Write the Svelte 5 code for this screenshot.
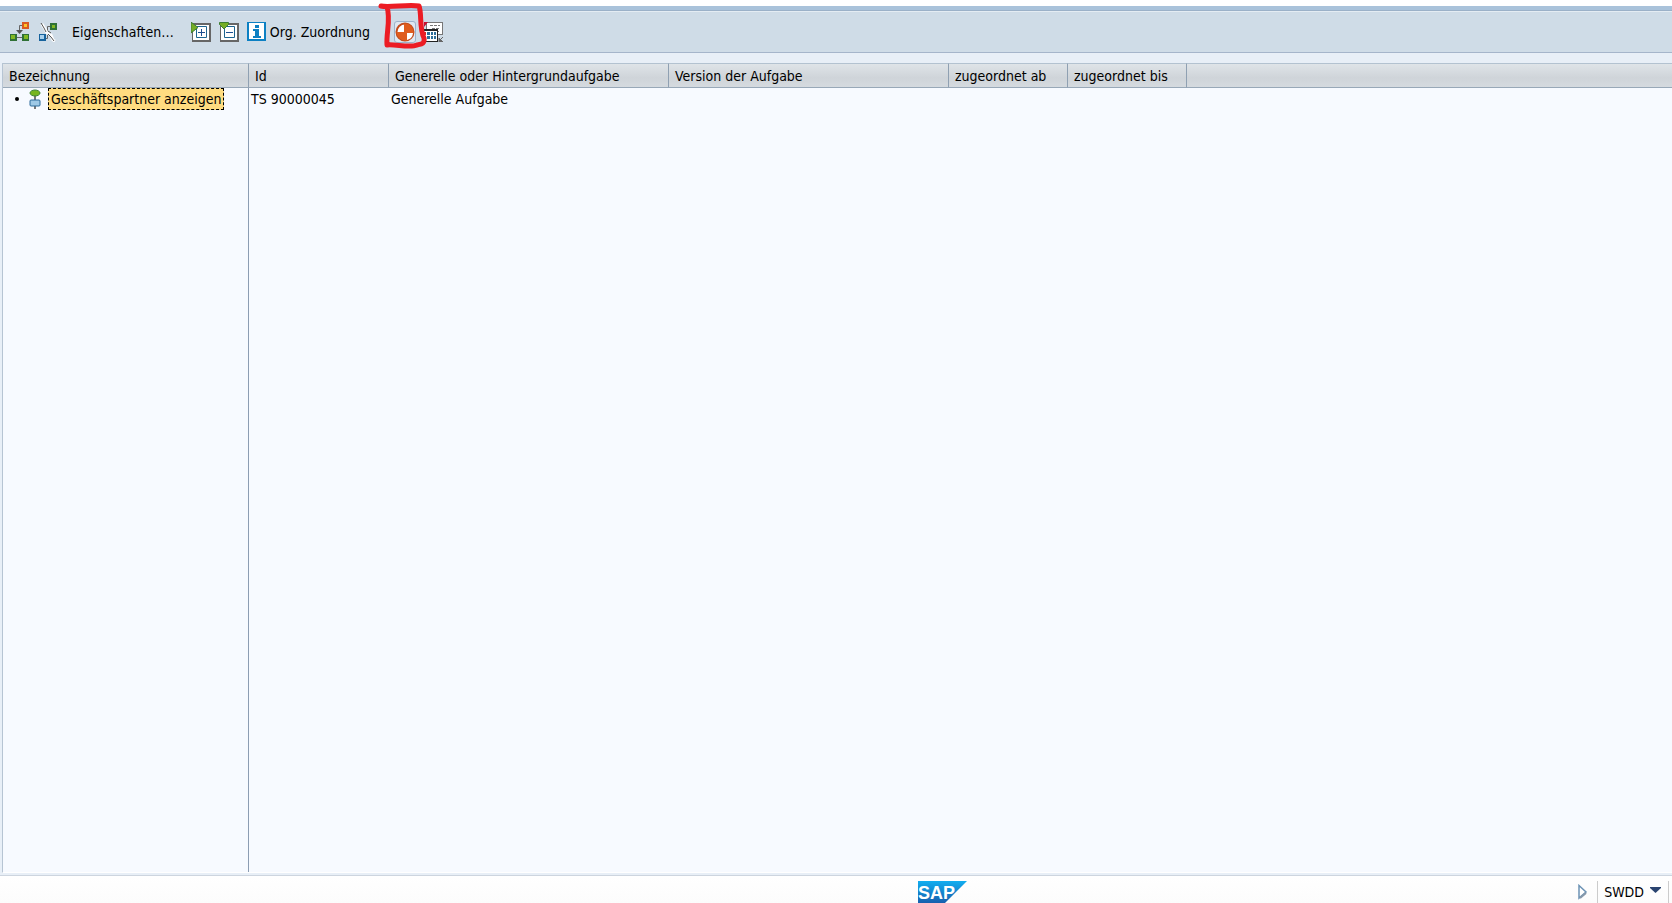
<script>
  const columns = [
    { label: 'Bezeichnung', width: 246 },
    { label: 'Id', width: 140 },
    { label: 'Generelle oder Hintergrundaufgabe', width: 280 },
    { label: 'Version der Aufgabe', width: 280 },
    { label: 'zugeordnet ab', width: 119 },
    { label: 'zugeordnet bis', width: 119 },
  ];
</script>

<div class="app">
  <div class="band"></div>
  <header class="toolbar">
    <button class="icon" aria-label="Zuordnung anlegen">
      <svg width="20" height="20">
        <path d="M12 3.5H9.5V9" fill="none" stroke="#666" />
        <path d="M6 8h7l-3.5 4z" fill="#555" />
        <path d="M6 15h7v1H6z" fill="#666" />
        <path d="M12 0h7v7h-7z" fill="#d95a22" /><path d="M14 2h3v3h-3z" fill="#fbc62d" />
        <path d="M0 12h7v7H0zM12 12h7v7h-7z" fill="#2f7136" /><path d="M1 13h4v4H1zM14 13h4v4h-4z" fill="#82b923" />
      </svg>
    </button>
    <button class="icon" aria-label="Zuordnung löschen">
      <svg width="20" height="20">
        <path d="M12 4.5H9.5V16.5H6" fill="none" stroke="#666" />
        <path d="M12 1h7v7h-7z" fill="#2f7136" /><path d="M14 3h3v3h-3z" fill="#82b923" />
        <path d="M1 12h7v7H1z" fill="#17639d" /><path d="M2 13h4v4H2z" fill="#a9d1ed" />
        <path d="M4 2l3 5 2 4 4 2 2 5 2 1" fill="none" stroke="#fff" stroke-width="3" />
        <path d="M3 1l3 5 2 4M10 9l3 2M10 12l3 3 3 4" fill="none" stroke="#555" />
      </svg>
    </button>
    <button class="text">Eigenschaften…</button>
    <button class="icon" aria-label="Teilbaum expandieren">
      <svg width="20" height="20">
        <path d="M1 1h19v19H1z" fill="#666" /><path d="M2 3h16v15H2z" fill="#fff" />
        <path d="M5.5 4.5h10v11h-10z" fill="#fff" stroke="#1d6591" />
        <path d="M10.5 7v7M7 10.5h7" stroke="#1d4f91" />
        <path d="M0 0l7 5.5L0 11z" fill="#75ac25" stroke="#3c7d34" />
      </svg>
    </button>
    <button class="icon" aria-label="Teilbaum komprimieren">
      <svg width="20" height="20">
        <path d="M1 1h19v19H1z" fill="#666" /><path d="M2 3h16v15H2z" fill="#fff" />
        <path d="M5.5 4.5h10v11h-10z" fill="#fff" stroke="#1d6591" />
        <path d="M7 10.5h7" stroke="#1d4f91" />
        <path d="M.5 .5h9v2L5 7 .5 2.5z" fill="#75ac25" stroke="#3c7d34" />
      </svg>
    </button>
    <button class="text info">
      <svg width="20" height="20">
        <path d="M0 0h19v19H0z" fill="#0c80c3" /><path d="M2 1h15v16H2z" fill="#fff" />
        <path d="M8 3h4v3H8zM6 7h6v7h2v2H6v-2h2V9H6z" fill="#0c80c3" />
      </svg>
      <span>Org. Zuordnung</span>
    </button>
    <div class="marked">
      <button class="help" aria-label="Hilfe">
        <svg width="20" height="20">
          <circle cx="10" cy="10" r="8.5" fill="#fff" stroke="#c34c1c" stroke-width="2" />
          <path d="M9 10V1.500h1a8.500 8.500 0 0 1 8.500 9.500H12v7.500h-2A8.500 8.500 0 0 1 1.500 10z" fill="#df5c1d" />
          <path d="M12 11h6a8 8 0 0 1-6 7z" fill="#fff" />
        </svg>
      </button>
      <svg class="pen" width="54" height="52" aria-hidden="true">
        <path d="M6 5C14 7 33 3 44 5C47 12 44 27 49 37C50 43 46 43 42 44C35 47 20 43 12 44C11 33 16 17 12 6" fill="none" stroke="#ec1c24" stroke-width="5" stroke-linecap="round" stroke-linejoin="round" />
      </svg>
    </div>
    <button class="icon" aria-label="Layout">
      <svg width="20" height="20">
        <path d="M2 0h17v13H2z" fill="#777" /><path d="M3 1h15v11H3z" fill="#fff" />
        <path d="M6 3.5h10M8 6.5h8M12 9.5h4" stroke="#777" stroke-dasharray="3 1" />
        <path d="M0 7h14v13H0z" fill="#222" /><path d="M0 9h13v10H0z" fill="#fff" />
        <path d="M0 10h2v3H0zM0 14h2v4H0z" fill="#d22" />
        <path d="M3 10h3v3H3zM7 10h2v3H7zM10 10h2v3h-2zM3 14h3v3H3zM7 14h2v3H7zM10 14h2v3h-2z" fill="#2d6e98" />
        <path d="M0 0h4L0 5z" fill="#c8102e" />
        <path d="M15 16v4h4zM15 19l4-4" fill="#666" stroke="#666" />
      </svg>
    </button>
  </header>

  <main>
    <table>
      <colgroup>
        {#each columns as c}<col style="width: {c.width}px" />{/each}
        <col />
      </colgroup>
      <thead>
        <tr>
          {#each columns as c}<th scope="col">{c.label}</th>{/each}
          <td></td>
        </tr>
      </thead>
      <tbody>
        <tr>
          <td>
            <div class="node">
              <span class="bullet"></span>
              <svg width="12" height="20">
                <path d="M6 6v14" stroke="#777" stroke-width="2" />
                <ellipse cx="6" cy="4" rx="5" ry="3" fill="#76b51f" stroke="#3e8238" />
                <rect x="1" y="11" width="10" height="6" rx="1" fill="#9fc9e6" stroke="#2c6b9a" />
              </svg>
              <span class="selected">Geschäftspartner anzeigen</span>
            </div>
          </td>
          <td>TS 90000045</td>
          <td>Generelle Aufgabe</td>
          <td></td><td></td><td></td><td></td>
        </tr>
      </tbody>
    </table>
  </main>

  <footer>
    <div class="brand">
      <svg width="50" height="22" role="img" aria-label="SAP">
        <defs>
          <linearGradient id="sap" x2="0" y2="1"><stop stop-color="#12aef0" /><stop offset="1" stop-color="#175fae" /></linearGradient>
        </defs>
        <path d="M0 0h49L27 22H0z" fill="url(#sap)" />
        <text x="0" y="18">SAP</text>
      </svg>
    </div>
    <button class="icon" aria-label="Statusfelder einblenden">
      <svg width="12" height="16">
        <path d="M2 1.5l7 6.500-7 6z" fill="#fff" stroke="#6c93b5" stroke-width="1.500" />
        <path d="M9 9l-6 5" stroke="#8798aa" stroke-width="2" />
      </svg>
    </button>
    <button class="system">
      <span>SWDD</span>
      <svg width="12" height="10"><path d="M0 0h11v1L5.500 6 0 1z" fill="#2a4470" /></svg>
    </button>
  </footer>
</div>

<style>
  :global(body) { margin: 0; }
  .app {
    display: flex; flex-direction: column; min-height: 100vh;
    background: #e8eff7; color: #000; font: 14px/22px "DejaVu Sans Condensed", Tahoma, "DejaVu Sans", sans-serif;
  }
  button { border: 0; padding: 0; background: none; color: inherit; font: inherit; display: flex; align-items: center; }
  svg { display: block; flex: none; }
  .band { height: 4px; background: #a9c2da; border-top: 6px solid #fff; border-bottom: 1px solid #9bb1c8; }
  .toolbar {
    display: flex; align-items: center; height: 40px; padding-left: 10px; gap: 8px;
    background: #cfdce7; border-top: 1px solid #e4ecf3; border-bottom: 1px solid #a5b5ca;
  }
  .text { padding: 0 9px 0 6px; }
  .info { padding: 0; gap: 3px; }
  .marked { position: relative; margin-left: 16px; }
  .help { width: 22px; height: 22px; box-sizing: border-box; border: 1px solid #9db3cb; border-radius: 3px; background: #dfe8f1; justify-content: center; }
  .pen { position: absolute; left: -19px; top: -20px; pointer-events: none; }
  main {
    flex: 1; border-left: 1px solid #b6c4d3; border-bottom: 1px solid #fff;
    background: linear-gradient(#8c9db3, #8c9db3) 245px 0 / 1px 100% no-repeat, #f7faff;
    margin: 10px 0 2px 2px;
  }
  table { width: 100%; table-layout: fixed; border-collapse: separate; border-spacing: 0; }
  th, td { padding: 0 2px; font-weight: normal; text-align: left; white-space: nowrap; height: 22px; box-sizing: border-box; }
  thead th, thead td {
    height: 24px; padding: 1px 6px 0; border-top: 1px solid #b3c2d0; border-bottom: 1px solid #98a8b8;
    background: linear-gradient(#dfe4e8, #cfd4d9 60%, #d5dadf);
  }
  thead th { border-right: 1px solid #8fa0b2; }
  .node { display: flex; align-items: center; padding-left: 10px; gap: 10px; }
  .bullet { width: 4px; height: 4px; border-radius: 2px; background: #000; }
  .selected { margin-left: -3px; padding: 0 2px; line-height: 20px; border: 1px dashed #000; background: #ffdc80; }
  footer { display: flex; align-items: center; height: 23px; gap: 8px; padding: 4px 3px 0 0; background: linear-gradient(#fff, #fcfcfc); border-top: 1px solid #cdd5df; }
  .brand { flex: 1; padding-left: 55%; }
  .brand text { font: bold 18px "Liberation Sans", sans-serif; fill: #fff; }
  .system { border-left: 1px solid #ccc; border-right: 1px solid #ccc; padding: 0 6px; gap: 6px; }
</style>
